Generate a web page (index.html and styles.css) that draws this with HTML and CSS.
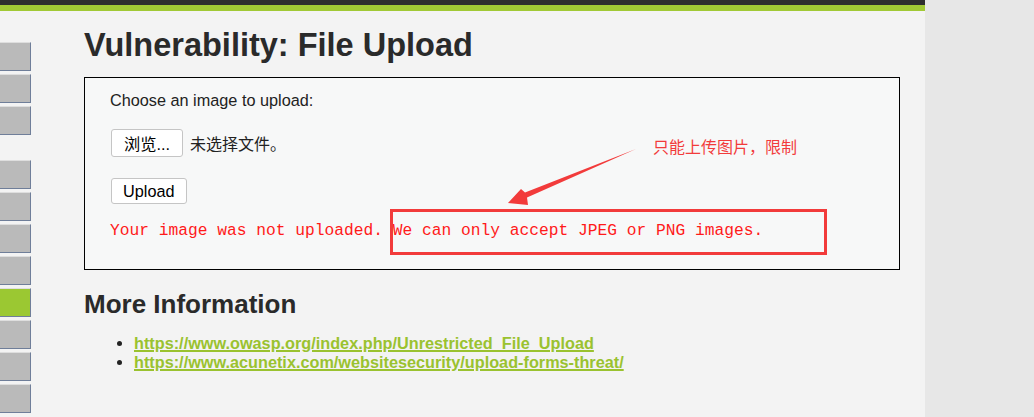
FILE: index.html
```html
<!DOCTYPE html>
<html>
<head>
<meta charset="utf-8">
<link rel="stylesheet" href="styles.css">
</head>
<body>
<div class="page">
  <div class="topbar"></div>
  <div class="greenbar"></div>
  <div class="layout">
    <div class="sidebar">
      <div class="menu-btn"></div>
      <div class="menu-btn"></div>
      <div class="menu-btn"></div>
      <div class="menu-gap"></div>
      <div class="menu-btn"></div>
      <div class="menu-btn"></div>
      <div class="menu-btn"></div>
      <div class="menu-btn"></div>
      <div class="menu-btn selected"></div>
      <div class="menu-btn"></div>
      <div class="menu-btn"></div>
      <div class="menu-btn"></div>
    </div>
    <div class="content">
      <h1 class="title">Vulnerability: File Upload</h1>
      <div class="vuln-box">
        <p class="prompt">Choose an image to upload:</p>
        <div class="file-row">
          <button class="btn browse">浏览...</button>
          <span class="no-file">未选择文件。</span>
        </div>
        <div class="upload-row">
          <button class="btn">Upload</button>
        </div>
        <pre class="error">Your image was not uploaded. We can only accept JPEG or PNG images.</pre>
        <div class="highlight"></div>
        <svg class="arrow" width="140" height="70" viewBox="0 0 140 70">
          <polygon points="5,55 18,41 22,44.5 133,1 24,49.5 25,57" fill="#f23b3b"/>
        </svg>
        <span class="note">只能上传图片，限制</span>
      </div>
      <h2 class="more">More Information</h2>
      <ul class="links">
        <li><a href="#">https://www.owasp.org/index.php/Unrestricted_File_Upload</a></li>
        <li><a href="#">https://www.acunetix.com/websitesecurity/upload-forms-threat/</a></li>
      </ul>
    </div>
  </div>
</div>
</body>
</html>
```

FILE: styles.css
```css
html, body {
  margin: 0;
  padding: 0;
}
body {
  background: #e7e7e7;
  font-family: "Liberation Sans", Arial, "Noto Sans CJK SC", sans-serif;
  color: #222;
}
.page {
  width: 925px;
  height: 417px;
  background: #f3f3f3;
  overflow: hidden;
}
.topbar {
  height: 5px;
  background: #2e2e2e;
}
.greenbar {
  height: 6px;
  background: #a1c935;
}
.layout {
  display: flex;
}
.sidebar {
  width: 31px;
  padding-top: 31px;
  flex: none;
}
.menu-btn {
  height: 27px;
  margin-bottom: 3px;
  background: #bababa;
  border-top: 1px solid #dedede;
  border-right: 1px solid #6f7e99;
  border-bottom: 1px solid #6f7e99;
}
.menu-btn.selected {
  background: #9bc832;
}
.menu-gap {
  height: 22px;
}
.content {
  margin-left: 53px;
  flex: none;
}
.title {
  margin: 12px 0 10px 0;
  font-size: 32.5px;
  line-height: 44px;
  font-weight: bold;
  color: #2a2a2a;
}
.vuln-box {
  position: relative;
  width: 816px;
  height: 193px;
  border: 1px solid #000;
  background: #f7f8f8;
  padding: 0 0 0 25px;
  box-sizing: border-box;
}
.prompt {
  margin: 13px 0 0 0;
  font-size: 16.25px;
  line-height: 19px;
}
.file-row {
  margin-top: 19px;
  display: flex;
  align-items: center;
  gap: 7px;
}
.btn {
  font-family: "Liberation Sans", Arial, "Noto Sans CJK SC", sans-serif;
  font-size: 16.25px;
  color: #000;
  background: #fff;
  border: 1px solid #c5c5c5;
  border-radius: 3px;
  padding: 0 11px;
  height: 26px;
  margin: 0 0 0 1px;
}
.btn.browse {
  height: 28px;
  padding: 0 12px;
}
.no-file {
  font-size: 16px;
  color: #222;
}
.upload-row {
  margin-top: 21px;
  display: flex;
}
.error {
  margin: 17px 0 0 0;
  font-family: "Liberation Mono", "Courier New", monospace;
  font-size: 16.25px;
  line-height: 20px;
  color: #ff1a1a;
}
.highlight {
  position: absolute;
  left: 305px;
  top: 131px;
  width: 431px;
  height: 40px;
  border: 3px solid #f23b3b;
}
.arrow {
  position: absolute;
  left: 418px;
  top: 70px;
}
.note {
  position: absolute;
  left: 568px;
  top: 58px;
  font-size: 16px;
  line-height: 20px;
  color: #f23b3b;
  font-family: "Noto Sans CJK SC", sans-serif;
}
.more {
  margin: 19px 0 0 0;
  font-size: 26px;
  line-height: 30px;
  font-weight: bold;
  color: #2a2a2a;
}
.links {
  margin: 15px 0 0 0;
  padding-left: 50px;
  font-size: 16.25px;
  line-height: 19px;
}
.links li {
  color: #222;
}
.links a {
  color: #9ac22f;
  font-weight: bold;
  text-decoration: underline;
  text-decoration-thickness: 2px;
}
```
